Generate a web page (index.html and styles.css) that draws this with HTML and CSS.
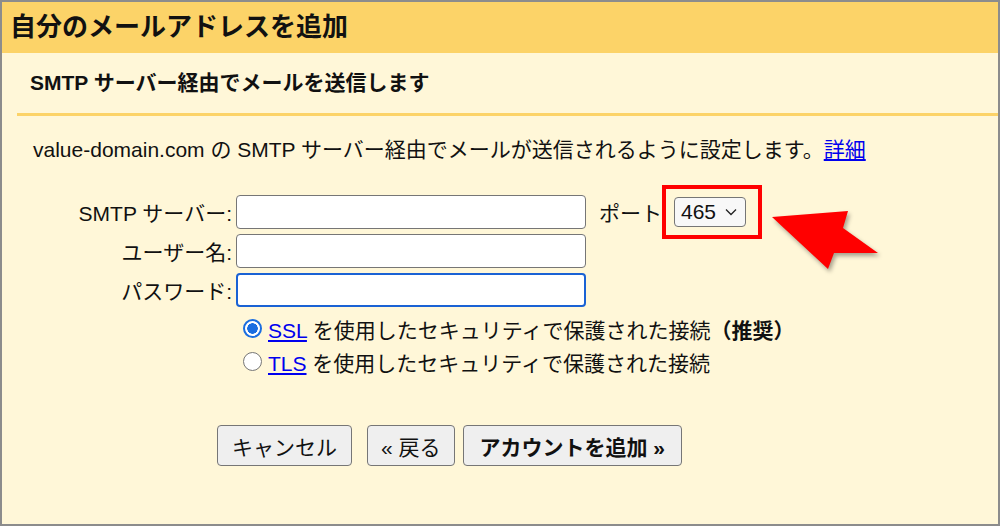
FILE: index.html
```html
<!DOCTYPE html>
<html lang="ja">
<head>
<meta charset="UTF-8" />
<title>自分のメールアドレスを追加</title>
<link rel="stylesheet" href="styles.css">
</head>
<body>
  <div class="dialog">
    <div class="header">
      <h1>自分のメールアドレスを追加</h1>
    </div>
    <h2 class="sub">SMTP サーバー経由でメールを送信します</h2>

    <p class="intro">value-domain.com の SMTP サーバー経由でメールが送信されるように設定します。<a href="#">詳細</a></p>

    <form class="smtp-form">
      <div class="field">
        <label for="host">SMTP サーバー:</label>
        <input type="text" id="host">
        <span class="port-label">ポート</span>
        <span class="port-mark">
          <span class="select">465
            <svg width="12" height="8" viewBox="0 0 12 8"><path d="M1 1.5 L6 6.5 L11 1.5" fill="none" stroke="#222" stroke-width="1.3"/></svg>
          </span>
        </span>
      </div>
      <div class="field">
        <label for="user">ユーザー名:</label>
        <input type="text" id="user">
      </div>
      <div class="field">
        <label for="pass">パスワード:</label>
        <input type="password" id="pass" class="focused">
      </div>

      <div class="security">
        <label class="option">
          <input type="radio" name="sec" checked>
          <span><a href="#">SSL</a> を使用したセキュリティで保護された接続<b>（推奨）</b></span>
        </label>
        <label class="option">
          <input type="radio" name="sec">
          <span><a href="#">TLS</a> を使用したセキュリティで保護された接続</span>
        </label>
      </div>

      <div class="actions">
        <button type="button" class="cancel">キャンセル</button>
        <button type="button" class="back">« 戻る</button>
        <button type="button" class="add">アカウントを追加 »</button>
      </div>
    </form>

    <!-- 注釈の矢印 -->
    <svg class="arrow" width="120" height="72" viewBox="765 205 120 72">
      <polygon points="772,217 848,211 843,228 878,253 834,253 828,269" fill="#ff0000"/>
    </svg>
  </div>
</body>
</html>
```

FILE: styles.css
```css
html, body {
  margin: 0;
  padding: 0;
}
body {
  font-family: "Liberation Sans", "Noto Sans CJK JP", sans-serif;
  color: #111;
}
.dialog {
  position: relative;
  width: 1000px;
  height: 526px;
  box-sizing: border-box;
  border: 2px solid #8c8c8c;
  background: #fff7d8;
}
.header {
  background: #fcd368;
}
.header h1 {
  margin: 0;
  padding-left: 8px;
  font-size: 26px;
  font-weight: 700;
  line-height: 51px;
}
.sub {
  margin: 0 0 0 15px;
  padding-left: 13px;
  font-size: 21px;
  font-weight: 700;
  line-height: 60px;
  border-bottom: 3px solid #fcd368;
}
.intro {
  margin: 22px 0 0;
  padding-left: 31px;
  font-size: 21px;
  line-height: 24px;
}
a {
  color: #0000ee;
}
.smtp-form {
  margin-top: 33px;
  font-size: 21px;
}
.field {
  display: flex;
  align-items: center;
  height: 34px;
  margin-bottom: 5px;
}
.field label {
  width: 230px;
  text-align: right;
}
.field input {
  width: 350px;
  height: 34px;
  box-sizing: border-box;
  margin: 0 0 0 4px;
  border: 1px solid #767676;
  border-radius: 4px;
  background: #fff;
}
.field input.focused {
  border: 2px solid #1a62d4;
}
.port-label {
  margin-left: 13px;
}
.port-mark {
  display: inline-flex;
  margin: -10px 0 -10px 0;
  padding: 8px 12px 8px 8px;
  border: 4px solid #ff0000;
}
.select {
  display: inline-flex;
  align-items: center;
  width: 72px;
  height: 30px;
  box-sizing: border-box;
  padding: 0 8px 0 6px;
  justify-content: space-between;
  border: 1px solid #767676;
  border-radius: 4px;
  background: #f8f8f8;
}
.security {
  margin-top: 1px;
  padding-left: 241px;
}
.option {
  display: flex;
  align-items: center;
  height: 33px;
}
.option input {
  appearance: none;
  width: 19px;
  height: 19px;
  margin: 0 6px 0 0;
  box-sizing: border-box;
  border: 1px solid #767676;
  border-radius: 50%;
  background: #fff;
}
.option input:checked {
  border: 2px solid #1a6de0;
  background: radial-gradient(circle, #1a6de0 0 5px, #fff 5.5px);
}
.option b {
  font-weight: 700;
}
.actions {
  display: flex;
  margin-top: 47px;
  padding-left: 215px;
}
button {
  height: 41px;
  padding: 0 14px;
  font-family: inherit;
  font-size: 21px;
  color: #111;
  background: #efefef;
  border: 1px solid #767676;
  border-radius: 4px;
}
button.back {
  margin-left: 15px;
  padding: 0 13px;
}
button.add {
  margin-left: 8px;
  padding: 0 16px;
  font-weight: 700;
}
.arrow {
  position: absolute;
  left: 763px;
  top: 203px;
  filter: drop-shadow(2px 3px 2px rgba(0, 0, 0, 0.35));
}
```
